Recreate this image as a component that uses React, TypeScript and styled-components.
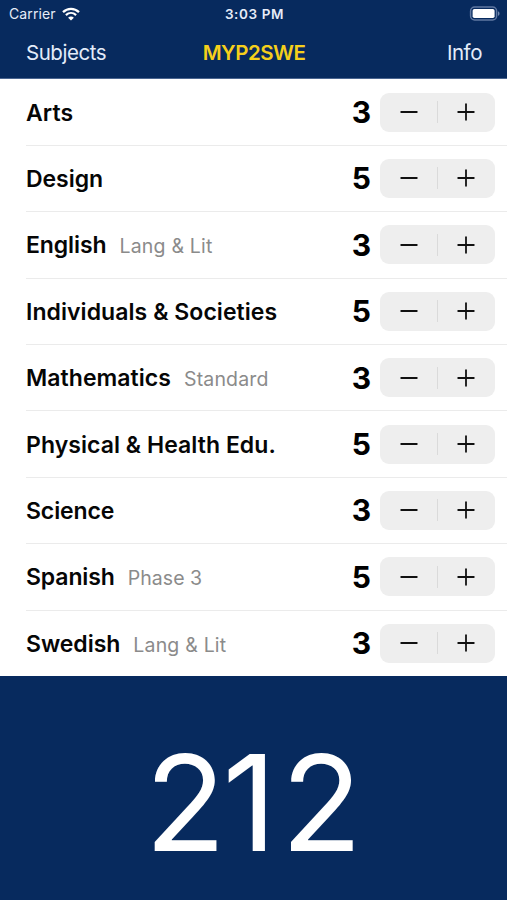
import React, { useState } from "react";
import styled, { createGlobalStyle } from "styled-components";

const GlobalStyle = createGlobalStyle`
  body {
    margin: 0;
    background: #072a5e;
    font-family: Inter, Roboto, sans-serif;
  }
`;

const Screen = styled.div`
  display: flex;
  flex-direction: column;
  width: 507px;
  height: 900px;
  overflow: hidden;
  background: #072a5e;
`;

const StatusBar = styled.header`
  display: grid;
  grid-template-columns: 1fr auto 1fr;
  align-items: center;
  box-sizing: border-box;
  height: 27px;
  padding: 0 7px 0 9px;
  color: #e6ecf8;
`;

const Carrier = styled.div`
  display: flex;
  align-items: center;
  gap: 6px;
  font-size: 14px;
  line-height: 27px;
  letter-spacing: 0.1px;
`;

const Clock = styled.div`
  font-size: 13.5px;
  font-weight: 600;
  letter-spacing: 0.6px;
`;

const BatterySlot = styled.div`
  display: flex;
  justify-content: flex-end;
`;

const NavBar = styled.nav`
  display: grid;
  grid-template-columns: 1fr auto 1fr;
  align-items: center;
  box-sizing: border-box;
  height: 52px;
  padding: 0 25px 0 26px;
  border-bottom: 1px solid #4a6590;
`;

const NavButton = styled.button<{ $end?: boolean }>`
  justify-self: ${(p) => (p.$end ? "end" : "start")};
  padding: 0;
  border: 0;
  background: none;
  color: #e3ecfa;
  font: 400 20.5px/26px Inter, sans-serif;
  letter-spacing: -0.45px;
`;

const Title = styled.h1`
  margin: 0;
  color: #f5cf1b;
  font-size: 20.5px;
  font-weight: 600;
  line-height: 26px;
  letter-spacing: -0.5px;
`;

const List = styled.ul`
  flex: none;
  margin: 0;
  padding: 0.4px 0 0;
  list-style: none;
  background: #fff;
`;

const Row = styled.li`
  display: flex;
  align-items: center;
  box-sizing: border-box;
  height: 66.4px;
  margin-left: 26px;
  padding-right: 12px;
  border-bottom: 1px solid #ebebeb;

  &:last-child {
    height: 65.4px;
    border-bottom: 0;
  }
`;

const Subject = styled.div`
  display: flex;
  flex: 1;
  align-items: baseline;
  gap: 13px;
  padding-top: 1px;
  white-space: nowrap;
`;

const Name = styled.span<{ $spacing: number }>`
  color: #060606;
  font-size: 23px;
  font-weight: 600;
  letter-spacing: ${(p) => p.$spacing}px;
`;

const Level = styled.span<{ $spacing?: number }>`
  color: #8b8b8b;
  font-size: 19.5px;
  letter-spacing: ${(p) => p.$spacing ?? 0}px;
`;

const Grade = styled.span`
  margin-right: 9px;
  color: #000;
  font-size: 30px;
  font-weight: 700;
`;

const StepperBox = styled.div`
  display: flex;
  align-items: center;
  width: 115px;
  height: 39px;
  border-radius: 9px;
  background: #eeeeee;
`;

const StepButton = styled.button`
  display: flex;
  flex: 1;
  align-items: center;
  justify-content: center;
  height: 39px;
  padding: 0;
  border: 0;
  background: none;
  color: #111;
`;

const Divider = styled.div`
  width: 1px;
  height: 22px;
  margin-left: -1px;
  background: #dadada;
`;

const Total = styled.footer`
  display: flex;
  flex: 1;
  align-items: center;
  justify-content: center;
  padding-top: 29px;
  color: #fff;
  font-size: 133px;
  font-weight: 430;
  line-height: 1;
`;

const Digit = styled.span<{ $kern: number }>`
  margin-right: ${(p) => p.$kern}px;
`;

const WifiIcon = () => (
  <svg width="18" height="14" viewBox="0 0 18 14" fill="none" stroke="#fff">
    <path d="M1 5.1C5.6.7 12.4.7 17 5.1" strokeWidth="2.3" />
    <path d="M3.9 8.1c3-2.8 7.2-2.8 10.2 0" strokeWidth="2.2" />
    <path d="M9 13.6 6.1 10.7c1.7-1.5 4.1-1.5 5.8 0Z" fill="#fff" stroke="none" />
  </svg>
);

const BatteryIcon = () => (
  <svg width="31" height="15" viewBox="0 0 31 15">
    <rect x="1.6" y="1" width="26" height="13" rx="4" fill="#072a5e" stroke="#6078a1" strokeWidth="1.5" />
    <rect x="3.6" y="3" width="22" height="9" rx="1.8" fill="#fff" />
    <path d="M29 5.2v4.6c2-.8 2-3.8 0-4.6Z" fill="#7188ae" />
  </svg>
);

const StepIcon = ({ plus }: { plus?: boolean }) => (
  <svg width="18" height="18" viewBox="0 0 18 18" stroke="currentColor" strokeWidth="1.8" strokeLinecap="round">
    <path d="M1.2 9h15.6" />
    {plus && <path d="M9 1.2v15.6" />}
  </svg>
);

const subjects = [
  { name: "Arts", grade: 3, spacing: 0.1 },
  { name: "Design", grade: 5, spacing: -0.05 },
  { name: "English", level: "Lang & Lit", grade: 3, spacing: -0.1, levelSpacing: 0.2 },
  { name: "Individuals & Societies", grade: 5, spacing: 0.06 },
  { name: "Mathematics", level: "Standard", grade: 3, spacing: 0.06, levelSpacing: 0.15 },
  { name: "Physical & Health Edu.", grade: 5, spacing: 0.05 },
  { name: "Science", grade: 3, spacing: -0.1 },
  { name: "Spanish", level: "Phase 3", grade: 5, spacing: -0.12, levelSpacing: 0.05 },
  { name: "Swedish", level: "Lang & Lit", grade: 3, spacing: -0.05, levelSpacing: 0.2 },
];

const total = [
  { digit: "2", kern: -3.5 },
  { digit: "1", kern: 4.5 },
  { digit: "2", kern: 0 },
];

export default function App() {
  const [grades, setGrades] = useState(subjects.map((s) => s.grade));
  const step = (index: number, by: number) =>
    setGrades((all) => all.map((g, i) => (i === index ? Math.min(7, Math.max(1, g + by)) : g)));

  return (
    <Screen>
      <GlobalStyle />
      <StatusBar>
        <Carrier>
          Carrier <WifiIcon />
        </Carrier>
        <Clock>3:03 PM</Clock>
        <BatterySlot>
          <BatteryIcon />
        </BatterySlot>
      </StatusBar>
      <NavBar>
        <NavButton>Subjects</NavButton>
        <Title>MYP2SWE</Title>
        <NavButton $end>Info</NavButton>
      </NavBar>
      <List>
        {subjects.map((s, i) => (
          <Row key={s.name}>
            <Subject>
              <Name $spacing={s.spacing}>{s.name}</Name>
              {s.level && <Level $spacing={s.levelSpacing}>{s.level}</Level>}
            </Subject>
            <Grade>{grades[i]}</Grade>
            <StepperBox>
              <StepButton aria-label="Decrease" onClick={() => step(i, -1)}>
                <StepIcon />
              </StepButton>
              <Divider />
              <StepButton aria-label="Increase" onClick={() => step(i, 1)}>
                <StepIcon plus />
              </StepButton>
            </StepperBox>
          </Row>
        ))}
      </List>
      <Total>
        {total.map((t, i) => (
          <Digit key={i} $kern={t.kern}>
            {t.digit}
          </Digit>
        ))}
      </Total>
    </Screen>
  );
}
